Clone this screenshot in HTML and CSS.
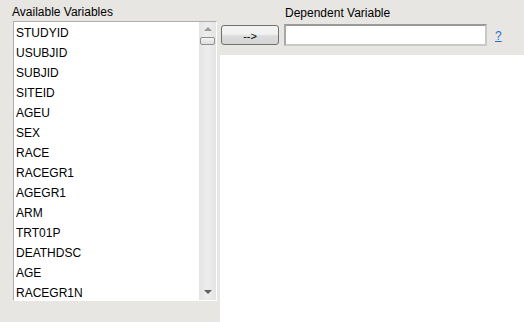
FILE: index.html
```html
<!DOCTYPE html>
<html lang="en">
<head>
  <meta charset="UTF-8" />
  <title>Dependent Variable</title>
  <link rel="stylesheet" href="styles.css">
</head>
<body>
  <div class="left">
    <div class="label">Available Variables</div>
    <div class="listbox">
      <ul class="items">
        <li>STUDYID</li>
        <li>USUBJID</li>
        <li>SUBJID</li>
        <li>SITEID</li>
        <li>AGEU</li>
        <li>SEX</li>
        <li>RACE</li>
        <li>RACEGR1</li>
        <li>AGEGR1</li>
        <li>ARM</li>
        <li>TRT01P</li>
        <li>DEATHDSC</li>
        <li>AGE</li>
        <li>RACEGR1N</li>
      </ul>
      <div class="scrollbar">
        <span class="arrow up"></span>
        <span class="thumb"></span>
        <span class="fill"></span>
        <span class="arrow down"></span>
      </div>
    </div>
  </div>

  <div class="right">
    <div class="top">
      <div class="dep-label">Dependent Variable</div>
      <div class="controls">
        <button class="move">--&gt;</button>
        <input class="dep-input" type="text" />
        <a class="help" href="#">?</a>
      </div>
    </div>
    <div class="panel"></div>
  </div>
</body>
</html>
```

FILE: styles.css
```css
* {
  margin: 0;
  padding: 0;
  box-sizing: border-box;
}
html, body {
  height: 100%;
  overflow: hidden;
}
body {
  display: flex;
  background: #e8e6e3;
  font-family: 'Liberation Sans', Arial, sans-serif;
  font-size: 12px;
  color: #000;
}
.left {
  width: 220px;
  padding-left: 12px;
  display: flex;
  flex-direction: column;
}
.label {
  margin-top: 5px;
  line-height: 14px;
  height: 16px;
}
.listbox {
  margin-left: 1px;
  width: 204px;
  height: 280px;
  border: 1px solid #abadb3;
  border-right-color: #fff;
  border-bottom-color: #fff;
  background: #fff;
  display: flex;
  overflow: hidden;
}
.items {
  list-style: none;
  flex: 1;
  padding: 1px 0 0 2px;
}
.items li {
  height: 20px;
  line-height: 20px;
  white-space: nowrap;
}
.scrollbar {
  width: 17px;
  background: linear-gradient(to right, #e4e4e4, #ededed 50%, #e4e4e4);
  display: flex;
  flex-direction: column;
  align-items: center;
}
.arrow {
  width: 0;
  height: 0;
  border-left: 4px solid transparent;
  border-right: 4px solid transparent;
}
.arrow.up {
  margin-top: 5px;
  border-bottom: 4px solid #9a9a9a;
}
.arrow.down {
  margin-bottom: 6px;
  border-top: 4px solid #606060;
}
.thumb {
  margin-top: 6px;
  width: 15px;
  height: 8px;
  border: 1px solid #8e8f8f;
  border-radius: 2px;
  background: linear-gradient(#f4f4f4, #dcdcdc);
}
.fill {
  flex: 1;
}
.right {
  flex: 1;
  display: flex;
  flex-direction: column;
}
.top {
  height: 55px;
}
.dep-label {
  margin: 6px 0 0 65px;
  line-height: 14px;
  height: 18px;
}
.controls {
  display: flex;
  align-items: flex-start;
}
.move {
  margin: 1px 0 0 1px;
  width: 58px;
  height: 20px;
  border: 1px solid #707070;
  border-radius: 3px;
  background: linear-gradient(#f2f2f2 45%, #dcdcdc 55%, #d4d4d4);
  font-family: 'Liberation Sans', Arial, sans-serif;
  font-size: 11px;
  padding-top: 1px;
}
.dep-input {
  margin-left: 5px;
  width: 203px;
  height: 22px;
  border: 2px solid #c9c9c9;
  border-top-color: #9a9a9a;
  border-left-color: #a8a8a8;
  background: #fff;
  outline: none;
}
.help {
  margin: 5px 0 0 8px;
  color: #1f6fd6;
  font-size: 12px;
  line-height: 14px;
}
.panel {
  flex: 1;
  background: #fff;
}
```
